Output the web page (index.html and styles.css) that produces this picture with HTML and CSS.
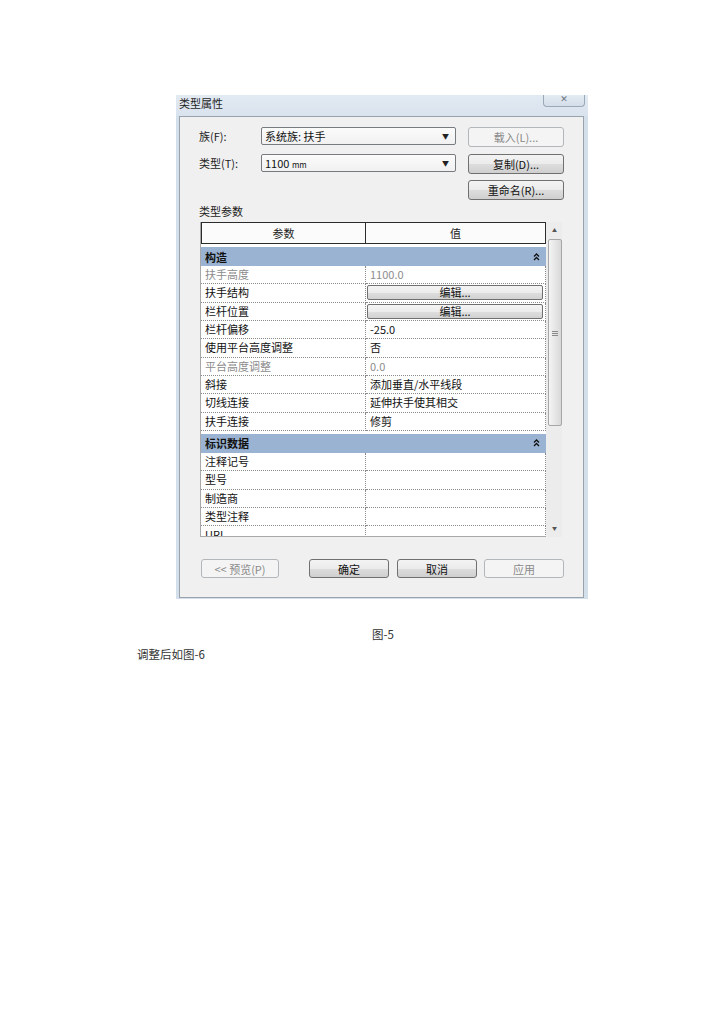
FILE: index.html
```html
<!DOCTYPE html>
<html lang="zh">
<head>
<meta charset="utf-8">
<title>类型属性</title>
<link rel="stylesheet" href="styles.css">
</head>
<body>
<div class="page">
  <div class="dialog">
    <div class="titlebar">
      <span class="title">类型属性</span>
      <span class="close">✕</span>
    </div>
    <div class="panel">
      <div class="top-grid">
        <span class="lbl">族(F):</span>
        <div class="combo"><span>系统族: 扶手</span><span class="arrow">▼</span></div>
        <div class="btn disabled">载入(L)...</div>

        <span class="lbl">类型(T):</span>
        <div class="combo"><span>1100 <small>mm</small></span><span class="arrow">▼</span></div>
        <div class="btn">复制(D)...</div>

        <span></span>
        <span></span>
        <div class="btn">重命名(R)...</div>
      </div>

      <div class="section-lbl">类型参数</div>

      <div class="table">
        <div class="table-main">
          <div class="thead">
            <div class="th c1">参数</div>
            <div class="th c2">值</div>
          </div>
          <div class="tbody">
            <div class="group"><span>构造</span><svg class="chev" width="7" height="8" viewBox="0 0 7 8"><path d="M1 3.5 L3.5 1 L6 3.5 M1 7 L3.5 4.5 L6 7" fill="none" stroke="#111" stroke-width="1.3"/></svg></div>
            <div class="row"><div class="td c1 dim">扶手高度</div><div class="td c2 dim">1100.0</div></div>
            <div class="row"><div class="td c1">扶手结构</div><div class="td c2 btncell"><div class="editbtn">编辑...</div></div></div>
            <div class="row"><div class="td c1">栏杆位置</div><div class="td c2 btncell"><div class="editbtn">编辑...</div></div></div>
            <div class="row"><div class="td c1">栏杆偏移</div><div class="td c2">-25.0</div></div>
            <div class="row"><div class="td c1">使用平台高度调整</div><div class="td c2">否</div></div>
            <div class="row"><div class="td c1 dim">平台高度调整</div><div class="td c2 dim">0.0</div></div>
            <div class="row"><div class="td c1">斜接</div><div class="td c2">添加垂直/水平线段</div></div>
            <div class="row"><div class="td c1">切线连接</div><div class="td c2">延伸扶手使其相交</div></div>
            <div class="row"><div class="td c1">扶手连接</div><div class="td c2">修剪</div></div>
            <div class="group"><span>标识数据</span><svg class="chev" width="7" height="8" viewBox="0 0 7 8"><path d="M1 3.5 L3.5 1 L6 3.5 M1 7 L3.5 4.5 L6 7" fill="none" stroke="#111" stroke-width="1.3"/></svg></div>
            <div class="row"><div class="td c1">注释记号</div><div class="td c2"></div></div>
            <div class="row"><div class="td c1">型号</div><div class="td c2"></div></div>
            <div class="row"><div class="td c1">制造商</div><div class="td c2"></div></div>
            <div class="row"><div class="td c1">类型注释</div><div class="td c2"></div></div>
            <div class="row"><div class="td c1">URL</div><div class="td c2"></div></div>
          </div>
        </div>
        <div class="scrollbar">
          <div class="sb-arrow">▲</div>
          <div class="thumb"><span class="grip"></span></div>
          <div class="sb-space"></div>
          <div class="sb-arrow">▼</div>
        </div>
      </div>

      <div class="bottom">
        <div class="btn disabled w78">&lt;&lt; 预览(P)</div>
        <div class="btn w80 ok">确定</div>
        <div class="btn w80 cancel">取消</div>
        <div class="btn disabled w80 apply">应用</div>
      </div>
    </div>
  </div>

  <p class="caption">图-5</p>
  <p class="para">调整后如图-6</p>
</div>
</body>
</html>
```

FILE: styles.css
```css
* { box-sizing: border-box; }

html, body {
  margin: 0;
  padding: 0;
  background: #ffffff;
}

body {
  width: 724px;
  height: 1024px;
  font-family: "Noto Sans CJK SC", "DejaVu Sans", sans-serif;
  color: #1a1a1a;
}

.page {
  padding-top: 95px;
}

.dialog {
  margin-left: 176px;
  width: 412px;
  height: 504px;
  background: #d3dfeb;
  padding: 0 4px 1px 3px;
  display: flex;
  flex-direction: column;
}

.titlebar {
  height: 21px;
  display: flex;
  justify-content: space-between;
  align-items: flex-start;
  background: linear-gradient(#e2eaf2, #d9e3ee);
  margin: 0 -4px 0 -3px;
  padding: 0 3px 0 3px;
}

.title {
  font-size: 11px;
  line-height: 16px;
  color: #1e1e1e;
}

.close {
  width: 42px;
  height: 12px;
  border: 1px solid #9aa8b8;
  border-top: none;
  border-radius: 0 0 4px 4px;
  background: linear-gradient(#e4ebf3, #d4dee9);
  font-size: 9px;
  line-height: 8px;
  text-align: center;
  color: #6b7580;
}

.panel {
  flex: 1;
  background: #f0f0f0;
  border: 1px solid #9aa2ab;
  padding: 10px 0 0 0;
  font-size: 11px;
}

.top-grid {
  display: grid;
  grid-template-columns: 62px 207px 96px;
  grid-auto-rows: 20px;
  row-gap: 6.5px;
  padding-left: 19px;
}

.lbl {
  line-height: 18px;
  font-size: 11px;
  color: #222;
}

.combo {
  width: 195px;
  height: 18px;
  border: 1px solid #777b80;
  border-radius: 2px;
  background: linear-gradient(#fbfbfb, #f1f1f1);
  display: flex;
  justify-content: space-between;
  align-items: center;
  padding: 0 6px 0 3px;
  font-size: 11px;
  color: #111;
}

.combo small {
  font-size: 8px;
}

.arrow {
  font-size: 7px;
  color: #222;
}

.btn {
  height: 20px;
  border: 1px solid #707070;
  border-radius: 3px;
  background: linear-gradient(#f3f3f3 0%, #ebebeb 50%, #dddddd 51%, #cfcfcf 100%);
  display: flex;
  align-items: center;
  justify-content: center;
  font-size: 11px;
  color: #111;
}

.btn.disabled {
  border-color: #b3b7ba;
  background: #f4f4f4;
  color: #8a8a8a;
}

.section-lbl {
  margin: 3px 0 3px 19px;
  line-height: 16px;
  height: 16px;
  font-size: 11px;
  color: #222;
}

.table {
  margin-left: 20px;
  width: 362px;
  height: 315px;
  display: flex;
}

.table-main {
  width: 346px;
  border-left: 1px solid #a9a9a9;
  border-bottom: 1px solid #a9a9a9;
  background: #ffffff;
  display: flex;
  flex-direction: column;
  overflow: hidden;
}

.thead {
  height: 22px;
  display: flex;
  border: 1px solid #2c2c2c;
  background: #fbfbfb;
  flex: none;
}

.th {
  text-align: center;
  line-height: 20px;
  font-size: 11px;
  color: #222;
}

.th.c1 {
  width: 164px;
  border-right: 1px solid #2c2c2c;
}

.th.c2 {
  flex: 1;
}

.tbody {
  flex: 1;
  overflow: hidden;
}

.group {
  height: 19px;
  margin-top: 3px;
  background: #9ab3d2;
  display: flex;
  justify-content: space-between;
  align-items: center;
  padding: 0 6px 0 4px;
  font-weight: bold;
  font-size: 11px;
  color: #111;
}

.chev {
  display: block;
}

.row {
  height: 18.33px;
  display: flex;
}

.td {
  height: 100%;
  border-bottom: 1px dotted #8a8a8a;
  font-size: 11px;
  line-height: 17px;
  padding-left: 4px;
  color: #111;
  white-space: nowrap;
}

.td.c1 {
  width: 165px;
  border-right: 1px dotted #8a8a8a;
}

.td.c2 {
  flex: 1;
  border-right: 1px dotted #8a8a8a;
}

.td.dim {
  color: #8c8c8c;
}

.btncell {
  padding: 1px 2px 1px 1px;
}

.editbtn {
  height: 15px;
  border: 1px solid #6f6f6f;
  border-radius: 2px;
  background: linear-gradient(#f4f4f4 0%, #ececec 50%, #dedede 51%, #d2d2d2 100%);
  text-align: center;
  line-height: 13px;
  font-size: 11px;
  color: #111;
}

.scrollbar {
  width: 16px;
  background: #ececec;
  display: flex;
  flex-direction: column;
  align-items: center;
  padding: 0 0 1px 1px;
}

.sb-arrow {
  height: 16px;
  font-size: 5px;
  line-height: 16px;
  color: #555;
}

.thumb {
  width: 14px;
  height: 187px;
  border: 1px solid #a6a6a6;
  border-radius: 2px;
  background: linear-gradient(90deg, #f4f4f4, #e4e4e4 60%, #d8d8d8);
  display: flex;
  align-items: center;
  justify-content: center;
  margin-top: 1px;
}

.grip {
  width: 6px;
  height: 5px;
  border-top: 1px solid #8a8a8a;
  border-bottom: 1px solid #8a8a8a;
  position: relative;
  margin-top: 2px;
}

.grip::after {
  content: "";
  position: absolute;
  left: 0;
  right: 0;
  top: 1px;
  border-top: 1px solid #8a8a8a;
}

.sb-space {
  flex: 1;
}

.bottom {
  display: flex;
  margin: 22px 0 0 21px;
  height: 19px;
}

.bottom .btn {
  height: 19px;
}

.w78 { width: 78px; }
.w80 { width: 80px; }
.ok { margin-left: 30px; }
.cancel { margin-left: 8px; }
.apply { margin-left: 7px; }

.caption {
  margin: 26px 0 0 372px;
  font-size: 11.5px;
  line-height: 18px;
  color: #333;
  font-family: "Noto Sans CJK SC", "Liberation Sans", sans-serif;
}

.para {
  margin: 2px 0 0 137px;
  font-size: 11.5px;
  line-height: 18px;
  color: #333;
  font-family: "Noto Sans CJK SC", "Liberation Sans", sans-serif;
}
```
